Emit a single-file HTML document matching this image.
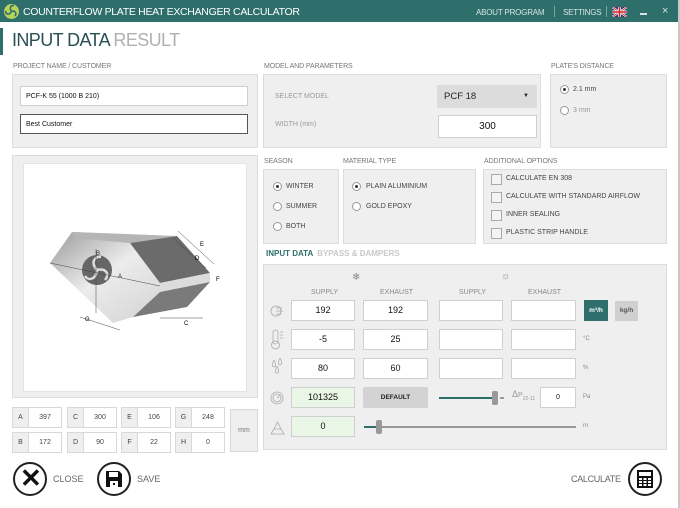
<!DOCTYPE html>
<html><head><meta charset="utf-8"><style>
*{box-sizing:border-box;margin:0;padding:0}
body{width:680px;height:508px;background:#fff;font-family:"Liberation Sans",sans-serif;position:relative;overflow:hidden;color:#333}
.a{position:absolute}
.lbl{position:absolute;font-size:7px;color:#777;letter-spacing:-.1px}
.pan{position:absolute;background:#efefef;border:1px solid #dcdcdc}
.inp{position:absolute;background:#fff;border:1px solid #cfcfcf;font-size:9px;text-align:center;line-height:19px;color:#111}
.rad{position:absolute;width:9px;height:9px;border:1px solid #999;border-radius:50%;background:#fff}
.rad.on::after{content:"";position:absolute;left:2px;top:2px;width:3px;height:3px;border-radius:50%;background:#333}
.t{position:absolute;font-size:7.5px;color:#444}
.chk{position:absolute;width:11px;height:11px;border:1px solid #aaa;background:#f4f4f4}
.dc{position:absolute;height:21px;border:1px solid #d8d8d8;background:#fff;font-size:7px;color:#444}
.dc span{position:absolute;left:0;top:0;width:16px;height:19px;background:#efefef;border-right:1px solid #d8d8d8;text-align:center;line-height:19px}
.dc b{font-weight:normal;position:absolute;left:16px;right:0;text-align:center;line-height:19px}
.circ{position:absolute;width:34px;height:34px;border:2px solid #222;border-radius:50%;background:#fff}
.bt{position:absolute;font-size:9px;color:#666}
</style></head><body>
<div class="a" style="left:0;top:0;width:678px;height:22px;background:#2e6f6b"></div>
<div class="a" style="left:678px;top:0;width:2px;height:508px;background:#c8c8c8"></div>
<svg class="a" style="left:3px;top:3px" width="17" height="17" viewBox="0 0 17 17"><circle cx="8.5" cy="8.5" r="7.5" fill="#b9d35a"/><path d="M8.5 8.5 C6 5 8 2 11 2.5 M8.5 8.5 C12 7 14 10 12 13 M8.5 8.5 C6.5 12 3 12 2.5 8" stroke="#2e6f6b" stroke-width="1.6" fill="none"/></svg>
<div class="a" style="left:23px;top:6px;font-size:10.5px;color:#fff;letter-spacing:-.3px">COUNTERFLOW PLATE HEAT EXCHANGER CALCULATOR</div>
<div class="a" style="left:476px;top:8px;font-size:8px;color:#d5e5e3;letter-spacing:-.2px">ABOUT PROGRAM</div>
<div class="a" style="left:554px;top:6px;width:1px;height:11px;background:#7aa6a2"></div>
<div class="a" style="left:563px;top:8px;font-size:8px;color:#d5e5e3;letter-spacing:-.2px">SETTINGS</div>
<div class="a" style="left:606px;top:6px;width:1px;height:11px;background:#7aa6a2"></div>
<svg class="a" style="left:612px;top:7px" width="15" height="10" viewBox="0 0 15 10"><rect width="15" height="10" fill="#24397a"/><path d="M0 0L15 10M15 0L0 10" stroke="#fff" stroke-width="2"/><path d="M0 0L15 10M15 0L0 10" stroke="#c22" stroke-width=".8"/><path d="M7.5 0V10M0 5H15" stroke="#fff" stroke-width="3"/><path d="M7.5 0V10M0 5H15" stroke="#c22" stroke-width="1.6"/></svg>
<div class="a" style="left:640px;top:13px;width:7px;height:2px;background:#d5e5e3"></div>
<div class="a" style="left:662px;top:5px;font-size:11px;color:#d5e5e3">×</div>
<div class="a" style="left:0;top:28px;width:3px;height:27px;background:#2e6f6b"></div>
<div class="a" style="left:12px;top:30px;font-size:18px;color:#2a4f55;letter-spacing:-.6px">INPUT DATA <span style="color:#b0b0b0">RESULT</span></div>

<div class="lbl" style="left:13px;top:63px">PROJECT NAME / CUSTOMER</div>
<div class="pan" style="left:12px;top:74px;width:246px;height:74px"></div>
<div class="inp" style="left:20px;top:86px;width:228px;height:20px;text-align:left;padding-left:5px;font-size:7px">PCF-K 55 (1000 B 210)</div>
<div class="inp" style="left:20px;top:114px;width:228px;height:20px;text-align:left;padding-left:5px;font-size:7px;border-color:#555">Best Customer</div>

<div class="lbl" style="left:264px;top:63px">MODEL AND PARAMETERS</div>
<div class="pan" style="left:263px;top:74px;width:278px;height:74px"></div>
<div class="t" style="left:275px;top:93px;color:#999;font-size:7px">SELECT MODEL</div>
<div class="a" style="left:437px;top:85px;width:100px;height:23px;background:#dcdcdc;font-size:9.5px;line-height:23px;padding-left:7px;color:#222">PCF 18<span style="position:absolute;right:8px;font-size:6px">▼</span></div>
<div class="t" style="left:275px;top:121px;color:#999;font-size:7px">WIDTH (mm)</div>
<div class="inp" style="left:438px;top:115px;width:99px;height:23px;line-height:22px;font-size:10px">300</div>

<div class="lbl" style="left:551px;top:63px">PLATE'S DISTANCE</div>
<div class="pan" style="left:550px;top:74px;width:117px;height:74px"></div>
<div class="rad on" style="left:560px;top:85px"></div><div class="t" style="left:573px;top:86px;font-size:7px">2.1 mm</div>
<div class="rad" style="left:560px;top:106px"></div><div class="t" style="left:573px;top:107px;font-size:7px;color:#999">3 mm</div>

<div class="pan" style="left:12px;top:155px;width:246px;height:243px"></div>
<div class="a" style="left:23px;top:163px;width:224px;height:229px;background:#fff;border:1px solid #e4e4e4"></div>
<svg class="a" style="left:23px;top:163px" width="224" height="229" viewBox="23 163 224 229">
<defs><linearGradient id="g1" x1="0" y1="0" x2="1" y2="1"><stop offset="0" stop-color="#9a9a9a"/><stop offset=".45" stop-color="#ececec"/><stop offset="1" stop-color="#cfcfcf"/></linearGradient></defs>
<polygon points="72,232 177,236 130,243 160,283 160,292 133,317 113,323 50,263" fill="url(#g1)"/>
<polygon points="72,232 177,236 130,243 75,238" fill="#b5b5b5"/>
<polygon points="130,243 177,236 210,273 160,283" fill="#6b6b6b"/>
<polygon points="160,283 210,273 210,282 160,292" fill="#dcdcdc"/>
<polygon points="160,292 210,282 187,307 133,317" fill="#7a7a7a"/>
<circle cx="97" cy="270" r="15" fill="#666"/>
<path d="M97 270 C90 262 95 256 101 257 M97 270 C106 268 110 274 105 280 M97 270 C96 280 88 281 85 276" stroke="#ddd" stroke-width="2.5" fill="none"/>
<path d="M50 263 L160 286 M96 249 V313 M173 238 L206 268 M178 231 L214 264 M160 318 H203 M80 317 L120 330" stroke="#444" stroke-width=".5" fill="none"/>
<text x="118" y="278" font-size="6" fill="#333">A</text><text x="96" y="255" font-size="6" fill="#333">B</text><text x="195" y="260" font-size="6">D</text><text x="200" y="246" font-size="6">E</text><text x="216" y="281" font-size="6">F</text><text x="184" y="325" font-size="6">C</text><text x="85" y="321" font-size="6">G</text>
</svg>

<div class="dc" style="left:12px;top:407px;width:50px"><span>A</span><b>397</b></div>
<div class="dc" style="left:67px;top:407px;width:50px"><span>C</span><b>300</b></div>
<div class="dc" style="left:121px;top:407px;width:50px"><span>E</span><b>106</b></div>
<div class="dc" style="left:175px;top:407px;width:50px"><span>G</span><b>248</b></div>
<div class="dc" style="left:12px;top:432px;width:50px"><span>B</span><b>172</b></div>
<div class="dc" style="left:67px;top:432px;width:50px"><span>D</span><b>90</b></div>
<div class="dc" style="left:121px;top:432px;width:50px"><span>F</span><b>22</b></div>
<div class="dc" style="left:175px;top:432px;width:50px"><span>H</span><b>0</b></div>
<div class="a" style="left:230px;top:409px;width:28px;height:43px;background:#efefef;border:1px solid #d8d8d8;font-size:7px;color:#777;text-align:center;line-height:41px">mm</div>

<div class="lbl" style="left:264px;top:158px">SEASON</div>
<div class="pan" style="left:263px;top:169px;width:76px;height:75px"></div>
<div class="rad on" style="left:273px;top:182px"></div><div class="t" style="left:286px;top:183px;font-size:7px">WINTER</div>
<div class="rad" style="left:273px;top:202px"></div><div class="t" style="left:286px;top:203px;font-size:7px">SUMMER</div>
<div class="rad" style="left:273px;top:222px"></div><div class="t" style="left:286px;top:223px;font-size:7px">BOTH</div>
<div class="lbl" style="left:343px;top:158px">MATERIAL TYPE</div>
<div class="pan" style="left:343px;top:169px;width:133px;height:75px"></div>
<div class="rad on" style="left:352px;top:182px"></div><div class="t" style="left:366px;top:183px;font-size:7px">PLAIN ALUMINIUM</div>
<div class="rad" style="left:352px;top:202px"></div><div class="t" style="left:366px;top:203px;font-size:7px">GOLD EPOXY</div>
<div class="lbl" style="left:484px;top:158px">ADDITIONAL OPTIONS</div>
<div class="pan" style="left:483px;top:169px;width:184px;height:75px"></div>
<div class="chk" style="left:491px;top:174px"></div><div class="t" style="left:506px;top:175px;font-size:7px">CALCULATE EN 308</div>
<div class="chk" style="left:491px;top:192px"></div><div class="t" style="left:506px;top:193px;font-size:7px">CALCULATE WITH STANDARD AIRFLOW</div>
<div class="chk" style="left:491px;top:210px"></div><div class="t" style="left:506px;top:211px;font-size:7px">INNER SEALING</div>
<div class="chk" style="left:491px;top:228px"></div><div class="t" style="left:506px;top:229px;font-size:7px">PLASTIC STRIP HANDLE</div>

<div class="a" style="left:266px;top:249px;font-size:8px;font-weight:bold;color:#2e6f6b">INPUT DATA <span style="color:#c8c8c8;margin-left:2px">BYPASS &amp; DAMPERS</span></div>
<div class="pan" style="left:263px;top:264px;width:404px;height:186px"></div>
<div class="a" style="left:352px;top:272px;font-size:10px;color:#888">❄</div>
<div class="a" style="left:501px;top:271px;font-size:10px;color:#888">☼</div>
<div class="t" style="left:311px;top:289px;font-size:7px;color:#888">SUPPLY</div>
<div class="t" style="left:380px;top:289px;font-size:7px;color:#888">EXHAUST</div>
<div class="t" style="left:459px;top:289px;font-size:7px;color:#888">SUPPLY</div>
<div class="t" style="left:528px;top:289px;font-size:7px;color:#888">EXHAUST</div>

<div class="inp" style="left:291px;top:300px;width:64px;height:21px">192</div>
<div class="inp" style="left:363px;top:300px;width:65px;height:21px">192</div>
<div class="inp" style="left:439px;top:300px;width:64px;height:21px"></div>
<div class="inp" style="left:511px;top:300px;width:65px;height:21px"></div>
<div class="a" style="left:584px;top:300px;width:24px;height:21px;background:#2e6f6b;color:#fff;font-size:6.5px;font-weight:bold;text-align:center;line-height:21px">m³/h</div>
<div class="a" style="left:615px;top:301px;width:23px;height:20px;background:#d0d0d0;color:#555;font-size:6.5px;font-weight:bold;text-align:center;line-height:20px">kg/h</div>

<div class="inp" style="left:291px;top:329px;width:64px;height:21px">-5</div>
<div class="inp" style="left:363px;top:329px;width:65px;height:21px">25</div>
<div class="inp" style="left:439px;top:329px;width:64px;height:21px"></div>
<div class="inp" style="left:511px;top:329px;width:65px;height:21px"></div>
<div class="t" style="left:583px;top:336px;font-size:6px;color:#888">°C</div>

<div class="inp" style="left:291px;top:358px;width:64px;height:21px">80</div>
<div class="inp" style="left:363px;top:358px;width:65px;height:21px">60</div>
<div class="inp" style="left:439px;top:358px;width:64px;height:21px"></div>
<div class="inp" style="left:511px;top:358px;width:65px;height:21px"></div>
<div class="t" style="left:583px;top:365px;font-size:6px;color:#888">%</div>

<div class="inp" style="left:291px;top:387px;width:64px;height:21px;background:#eaf6e6">101325</div>
<div class="a" style="left:363px;top:387px;width:65px;height:21px;background:#d3d3d3;border-radius:2px;font-size:6.5px;font-weight:bold;text-align:center;line-height:21px;color:#222">DEFAULT</div>
<div class="a" style="left:439px;top:397px;width:56px;height:2px;background:#2e6f6b"></div>
<div class="a" style="left:492px;top:391px;width:6px;height:14px;background:#999;border-radius:2px"></div>
<div class="a" style="left:500px;top:397px;width:4px;height:2px;background:#999"></div>
<div class="a" style="left:512px;top:389px;font-size:9px;color:#999">Δ<span style="font-size:7px">P</span><sub style="font-size:5px">22-11</sub></div>
<div class="inp" style="left:540px;top:387px;width:36px;height:21px;font-size:7px">0</div>
<div class="t" style="left:583px;top:394px;font-size:6px;color:#888">Pa</div>

<div class="inp" style="left:291px;top:416px;width:64px;height:21px;background:#eaf6e6">0</div>
<div class="a" style="left:364px;top:426px;width:212px;height:2px;background:#999"></div>
<div class="a" style="left:364px;top:426px;width:12px;height:2px;background:#2e6f6b"></div>
<div class="a" style="left:376px;top:420px;width:6px;height:14px;background:#999;border-radius:2px"></div>
<div class="t" style="left:583px;top:423px;font-size:6px;color:#888">m</div>

<svg class="a" style="left:270px;top:300px" width="16" height="140" viewBox="0 0 16 140" fill="none" stroke="#aaa" stroke-width=".8">
<circle cx="6" cy="11" r="5"/><path d="M6 8h6M6 11h7M6 14h6"/>
<rect x="3" y="30" width="5" height="14" rx="2.5"/><circle cx="5.5" cy="45" r="4"/><path d="M10 32h3M10 35h3M10 38h3"/>
<path d="M4 60 C2 64 2 67 4 67 C6 67 6 64 4 60 M10 58 C8 62 8 65 10 65 C12 65 12 62 10 58 M7 66 C5 70 5 73 7 73 C9 73 9 70 7 66"/>
<circle cx="7" cy="98" r="6"/><circle cx="7" cy="98" r="4"/><path d="M7 98 L10 95"/>
<path d="M1 134 H14 L11 129 H4 Z M4 129 L7.5 122 L11 129"/>
</svg>

<div class="circ" style="left:13px;top:462px"></div>
<div class="a" style="left:20px;top:463px;font-size:26px;font-weight:bold;color:#111;line-height:30px">✕</div>
<div class="bt" style="left:53px;top:474px">CLOSE</div>
<div class="circ" style="left:97px;top:462px"></div>
<svg class="a" style="left:105px;top:470px" width="18" height="18" viewBox="0 0 18 18"><path d="M1 1H14L17 4V17H1Z" fill="#111"/><rect x="4" y="2" width="9" height="5" fill="#fff"/><rect x="5" y="11" width="8" height="6" fill="#fff"/><rect x="8" y="13" width="2" height="2" fill="#111"/></svg>
<div class="bt" style="left:137px;top:474px">SAVE</div>
<div class="bt" style="left:571px;top:474px;letter-spacing:-.3px">CALCULATE</div>
<div class="circ" style="left:628px;top:462px"></div>
<svg class="a" style="left:636px;top:469px" width="18" height="20" viewBox="0 0 18 20"><rect x="1" y="1" width="16" height="18" fill="#111"/><rect x="3" y="3" width="12" height="4" fill="#fff"/><g fill="#fff"><rect x="3" y="9" width="3" height="2"/><rect x="7.5" y="9" width="3" height="2"/><rect x="12" y="9" width="3" height="2"/><rect x="3" y="12" width="3" height="2"/><rect x="7.5" y="12" width="3" height="2"/><rect x="12" y="12" width="3" height="2"/><rect x="3" y="15" width="3" height="2"/><rect x="7.5" y="15" width="3" height="2"/><rect x="12" y="15" width="3" height="2"/></g></svg>
</body></html>
